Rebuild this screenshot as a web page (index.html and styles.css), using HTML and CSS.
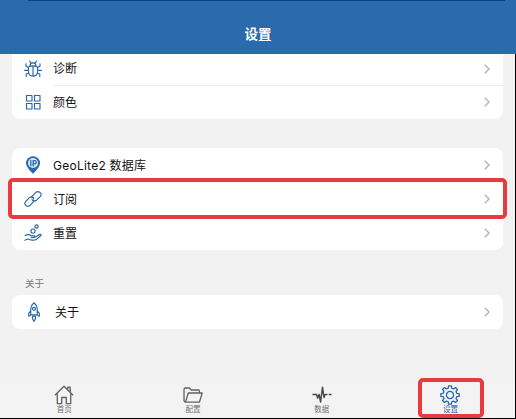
FILE: index.html
```html
<!DOCTYPE html>
<html lang="zh-CN">
<head>
<meta charset="utf-8">
<title>设置</title>
<link rel="stylesheet" href="styles.css">
</head>
<body>
<svg class="defs" aria-hidden="true">
  <symbol id="chevron" viewBox="0 0 6 10"><path d="M.8 .8L5 5L.8 9.2"/></symbol>
</svg>
<div class="app">
  <header class="header"><h1>设置</h1></header>
  <main class="content">
    <section class="group group-top">
      <div class="row">
        <svg class="icon" viewBox="0 0 18 18"><path d="M4.4 7Q9 4.8 13.6 7V11Q13.6 16.2 9 16.2T4.4 11ZM9 6V16M6 5.9Q6 2.9 9 2.9T12 5.9M7 3.2L5.6 1M11 3.2L12.4 1M4.4 7.4L2 6.2V3.8M13.6 7.4L16 6.2V3.8M4.3 10.3H.6M13.7 10.3H17.4M4.8 13L2.2 14V16.5M13.2 13L15.8 14V16.5"/></svg>
        <span class="label">诊断</span><svg class="chevron"><use href="#chevron"/></svg>
      </div>
      <div class="row divided">
        <svg class="icon" viewBox="0 0 18 18"><path d="M2.5 2.5H8V8H2.5ZM10.5 2.5H16V8H10.5ZM2.5 10.5H8V16H2.5ZM10.5 10.5H16V16H10.5Z"/></svg>
        <span class="label">颜色</span><svg class="chevron"><use href="#chevron"/></svg>
      </div>
    </section>
    <section class="group group-data">
      <div class="row">
        <svg class="icon" viewBox="0 0 18 18"><path class="solid" d="M9 17.7Q2 11 2 7.2A7 7 0 0 1 16 7.2Q16 11 9 17.7Z"/><circle class="pin-face" cx="9" cy="7" r="5"/><path class="pin-mark" d="M6.8 4.5V9.7M9.2 9.9V4.6H10.6A1.6 1.6 0 0 1 10.6 7.8H9.2"/></svg>
        <span class="label latin">GeoLite2 数据库</span><svg class="chevron"><use href="#chevron"/></svg>
      </div>
      <div class="row selected">
        <svg class="icon" viewBox="0 0 18 18"><path d="M7.4 7.2L11.7 2.6Q13.4 .8 15.6 2.2Q18.3 4.1 16.2 6.6L12.6 10.2Q10.4 11.8 8.4 10.2Q7.8 9.6 8.2 8.9M10.5 10.7L6.3 15.2Q4.5 17.1 2.2 15.7Q-.3 13.8 1.7 11.3L5.4 7.6Q7.4 6.1 9.3 7.5Q10.2 8.2 9.6 9"/></svg>
        <span class="label">订阅</span><svg class="chevron"><use href="#chevron"/></svg>
      </div>
      <div class="row">
        <svg class="icon" viewBox="0 0 18 18"><circle cx="9" cy="7.1" r="2.1"/><circle cx="12.5" cy="2.5" r="1.6"/><path d="M1 11.5Q4.5 9.7 7.3 11.7H10.4Q11.7 12.6 10.4 13.4H7.2M11.3 13L15.7 10.4Q17.7 9.9 16.9 11.5L12.2 15.6Q9.8 16.7 6.3 15.7L3.7 15L.8 16.2"/></svg>
        <span class="label">重置</span><svg class="chevron"><use href="#chevron"/></svg>
      </div>
    </section>
    <h2 class="caption">关于</h2>
    <section class="group">
      <div class="row about">
        <svg class="icon rocket" viewBox="0 0 18 20"><path d="M5.8 12.8V6.6Q6.2 3 9 .8Q11.8 3 12.2 6.6V12.8ZM5.7 8.8L3.7 11.4V14.2L6.2 12.8M12.3 8.8L14.3 11.4V14.2L11.8 12.8M7.7 14.3Q6.8 16.2 9 19.3Q11.2 16.2 10.3 14.3Z"/><circle cx="9" cy="6.8" r="1.5"/></svg>
        <span class="label">关于</span><svg class="chevron"><use href="#chevron"/></svg>
      </div>
    </section>
  </main>
  <nav class="tabs">
    <div class="tab"><svg class="tab-icon" viewBox="0 0 20 20"><path d="M.9 10.2L10 1.3L19.1 10.2M3.3 8.4V18.6H7.7V12.5H12.3V18.6H16.7V8.4M13.8 4.7V2.2H16.2V7"/></svg><span>首页</span></div>
    <div class="tab"><svg class="tab-icon" viewBox="0 0 20 20"><path d="M2.4 17.2L1 15.7V4.2Q1 3 2.2 3H6.4L8.2 5H15.4Q16.4 5 16.4 6V8M2.4 17.2L5.3 8H19.2L16.4 17.2Z"/></svg><span>配置</span></div>
    <div class="tab"><svg class="tab-icon pulse" viewBox="0 0 20 20"><path d="M.5 9.5H4.6L5.7 13L7.1 9.5L8.6 17L10.5 2.3L12 12.5L13.1 9.5H15.5M16.7 9.5H19.5"/></svg><span>数据</span></div>
    <div class="tab active"><svg class="tab-icon" viewBox="-10 -10 20 20"><path d="M6.8-1.7L9.1-1.4V1.4L6.8 1.7L6.01 3.61L7.42 5.44L5.44 7.42L3.61 6.01L1.7 6.8L1.4 9.1H-1.4L-1.7 6.8L-3.61 6.01L-5.44 7.42L-7.42 5.44L-6.01 3.61L-6.8 1.7L-9.1 1.4V-1.4L-6.8-1.7L-6.01-3.61L-7.42-5.44L-5.44-7.42L-3.61-6.01L-1.7-6.8L-1.4-9.1H1.4L1.7-6.8L3.61-6.01L5.44-7.42L7.42-5.44L6.01-3.61Z"/><circle r="3.6"/></svg><span>设置</span></div>
  </nav>
</div>
</body>
</html>
```
FILE: styles.css
```css
*, *::before, *::after { box-sizing: border-box; }
body {
  margin: 0;
  background: #000;
  color: #111;
  font-family: "Inter", "Noto Sans CJK SC", sans-serif;
}
.defs { display: none; }
.app {
  width: 516px;
  height: 418px;
  display: flex;
  flex-direction: column;
}
.header {
  position: relative;
  height: 54px;
  flex: none;
  padding-top: 23px;
  background: #2b6bad;
}
.header::before {
  content: "";
  position: absolute;
  top: 0;
  left: 28px;
  right: 11px;
  height: 1px;
  background: #084285;
}
h1 {
  margin: 0;
  color: #fff;
  font-size: 13.5px;
  line-height: 22px;
  text-align: center;
}
.content {
  width: 515px;
  height: 330px;
  padding: 0 12px;
  background: #f2f2f2;
}
.group {
  border-radius: 8px;
  background: #fff;
}
.group-top {
  height: 65px;
  margin-bottom: 29px;
  display: flex;
  flex-direction: column;
  justify-content: flex-end;
  border-radius: 0 0 8px 8px;
}
.row {
  position: relative;
  height: 34px;
  flex: none;
  display: flex;
  align-items: center;
  gap: 11px;
  padding: 0 13px 0 12px;
}
.group-top .row:first-child { height: 31px; padding-bottom: 2px; }
.divided::before {
  content: "";
  position: absolute;
  top: 0;
  left: 41px;
  right: 0;
  height: 1px;
  background: #ececec;
}
.selected::after {
  content: "";
  position: absolute;
  inset: -4px -4px -3px;
  border: 4px solid #e83b3d;
  border-radius: 5px;
}
.icon {
  width: 18px;
  height: 18px;
  flex: none;
  fill: none;
  stroke: #2867ac;
  stroke-width: 1.15;
  stroke-linejoin: round;
  stroke-linecap: round;
}
.icon .solid { fill: #2867ac; stroke: none; }
.icon .pin-face { fill: #d7e6f5; stroke: none; }
.icon .pin-mark { stroke-width: 1.3; }
.rocket { height: 20px; }
.about { padding-left: 13px; gap: 12px; }
.label {
  flex: 1;
  padding-top: 2px;
  font-size: 12px;
  line-height: 18px;
}
.group-top .row:first-child .label { padding-top: 1px; }
.latin { letter-spacing: .25px; }
.chevron {
  width: 6px;
  height: 10px;
  fill: none;
  stroke: #b7b7b9;
  stroke-width: 1.5;
}
.caption {
  height: 45px;
  margin: 0;
  padding: 26px 0 0 13px;
  color: #77777b;
  font-size: 9.5px;
  font-weight: 400;
  line-height: 16px;
}
.tabs {
  width: 515px;
  height: 34px;
  display: grid;
  grid-template-columns: repeat(4, 128.7px);
  background: #f3f3f3;
}
.tab {
  position: relative;
  display: flex;
  flex-direction: column;
  align-items: center;
  padding-top: 1px;
  color: #707070;
  font-size: 7.5px;
  line-height: 10px;
}
.tab-icon {
  width: 20px;
  height: 20px;
  flex: none;
  fill: none;
  stroke: #626262;
  stroke-width: 1.3;
  stroke-linejoin: round;
}
.tab-icon.pulse { stroke: #484848; stroke-width: 1.5; }
.active { color: #2867ac; }
.active .tab-icon { stroke: #2867ac; }
.active::after {
  content: "";
  position: absolute;
  top: -6px;
  bottom: 0;
  left: 32px;
  width: 66px;
  border: 4px solid #e83b3d;
  border-radius: 5px;
}
```
